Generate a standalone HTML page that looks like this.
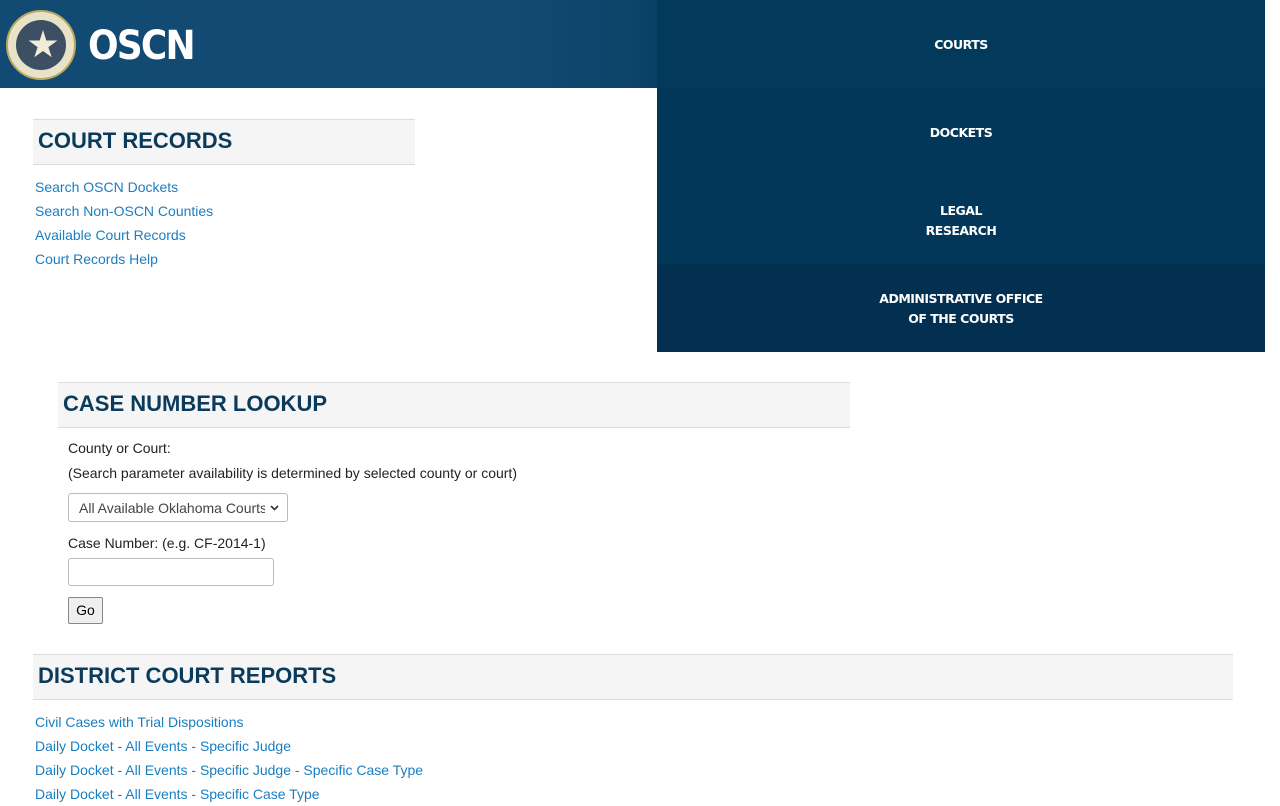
<!DOCTYPE html>
<html><head><meta charset="utf-8"><style>
*{margin:0;padding:0;box-sizing:border-box}
body{width:1280px;height:800px;overflow:hidden;background:#fff;font-family:"Liberation Sans",Arial,sans-serif;position:relative}
.hdr{position:absolute;left:0;top:0;width:1265px;height:88px;background:linear-gradient(90deg,#114a73 0%,#124a72 40%,#0c4369 50%,#033a5c 55%,#033a5c 100%)}
.logo{position:absolute;left:88px;top:23px;color:#fff;font-weight:bold;font-size:40px;font-family:"DejaVu Sans","Liberation Sans",sans-serif;letter-spacing:-2px;transform:scaleX(0.9);transform-origin:left}
.seal{position:absolute;left:6px;top:10px;width:70px;height:70px;border-radius:50%;background:#e8e2c8;border:2px solid #b8a860}
.seal i{position:absolute;left:8px;top:8px;width:50px;height:50px;border-radius:50%;background:#3c4f63}
.seal b{position:absolute;left:20px;top:18px;width:30px;height:30px;background:#f0ecd8;clip-path:polygon(50% 0,61% 35%,98% 35%,68% 57%,79% 91%,50% 70%,21% 91%,32% 57%,2% 35%,39% 35%)}
.nav{position:absolute;left:657px;width:608px;height:88px;padding-top:1px;background:#03375a;color:#fff;font-family:"DejaVu Sans","Liberation Sans",sans-serif;font-weight:bold;font-size:12.5px;text-align:center;display:flex;align-items:center;justify-content:center;line-height:20px;letter-spacing:-0.5px}
h2{position:absolute;background:#f5f5f5;border-top:1px solid #ddd;border-bottom:1px solid #ddd;color:#0b3b5c;font-size:22px;font-weight:bold;padding-left:5px;height:46px;line-height:42px}
.links{position:absolute;left:35px;font-size:14px;line-height:24px}
.links a{display:block;color:#1a7ec2;text-decoration:none}
.t{position:absolute;left:68px;font-size:14px;color:#222}
</style></head><body>
<div class="hdr"><div class="seal"><i></i><b></b></div><div class="logo">OSCN</div></div>
<div class="nav" style="top:0;background:#033a5c">COURTS</div>
<div class="nav" style="top:88px">DOCKETS</div>
<div class="nav" style="top:176px">LEGAL<br>RESEARCH</div>
<div class="nav" style="top:264px;background:#032f50">ADMINISTRATIVE OFFICE<br>OF THE COURTS</div>
<h2 style="left:33px;top:119px;width:382px">COURT RECORDS</h2>
<div class="links" style="top:175px"><a>Search OSCN Dockets</a><a>Search Non-OSCN Counties</a><a>Available Court Records</a><a>Court Records Help</a></div>
<h2 style="left:58px;top:382px;width:792px">CASE NUMBER LOOKUP</h2>
<div class="t" style="top:440px">County or Court:</div>
<div class="t" style="top:465px">(Search parameter availability is determined by selected county or court)</div>
<div style="position:absolute;left:68px;top:493px;width:220px;height:29px;border:1px solid #bbb;border-radius:3px;font-size:14px;color:#444;padding:6px 10px;white-space:nowrap;overflow:hidden"><span style="display:inline-block;width:186px;overflow:hidden">All Available Oklahoma Courts</span><svg style="position:absolute;right:8px;top:11px" width="9" height="6" viewBox="0 0 9 6"><path d="M1 1l3.5 3.5L8 1" stroke="#333" stroke-width="1.6" fill="none"/></svg></div>
<div class="t" style="top:535px">Case Number: (e.g. CF-2014-1)</div>
<div style="position:absolute;left:68px;top:558px;width:206px;height:28px;border:1px solid #bbb;border-radius:3px"></div>
<div style="position:absolute;left:68px;top:597px;width:35px;height:27px;border:1px solid #888;border-radius:2px;background:#efefef;font-size:14px;text-align:center;line-height:25px">Go</div>
<h2 style="left:33px;top:654px;width:1200px">DISTRICT COURT REPORTS</h2>
<div class="links" style="top:710px"><a>Civil Cases with Trial Dispositions</a><a>Daily Docket - All Events - Specific Judge</a><a>Daily Docket - All Events - Specific Judge - Specific Case Type</a><a>Daily Docket - All Events - Specific Case Type</a></div>
</body></html>
